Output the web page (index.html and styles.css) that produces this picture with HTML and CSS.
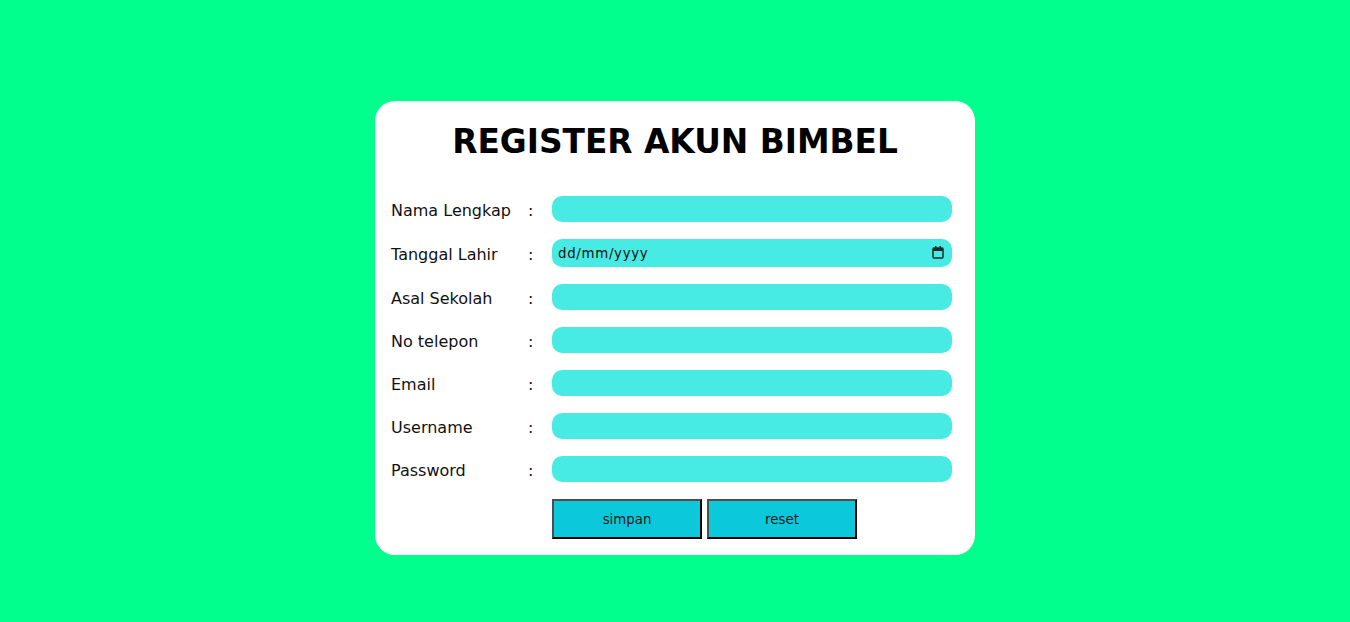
FILE: index.html
```html
<!DOCTYPE html>
<html lang="id">
<head>
<meta charset="utf-8">
<title>Register Akun Bimbel</title>
<link rel="stylesheet" href="styles.css">
</head>
<body>
<div class="card">
  <h1 class="title">REGISTER AKUN BIMBEL</h1>
  <form class="form">
    <label class="label">Nama Lengkap</label><span class="colon">:</span><input class="field" type="text">
    <label class="label">Tanggal Lahir</label><span class="colon">:</span>
    <div class="date-wrap">
      <input class="field date" type="text" placeholder="dd/mm/yyyy">
      <svg class="cal" width="12" height="13" viewBox="0 0 12 13" aria-hidden="true">
        <rect x="1" y="2" width="10" height="10" rx="1" fill="none" stroke="#1e2b2a" stroke-width="1.5"/>
        <rect x="1" y="2" width="10" height="3" fill="#1e2b2a"/>
        <rect x="3" y="0" width="1.5" height="3" fill="#1e2b2a"/>
        <rect x="7.5" y="0" width="1.5" height="3" fill="#1e2b2a"/>
      </svg>
    </div>
    <label class="label">Asal Sekolah</label><span class="colon">:</span><input class="field" type="text">
    <label class="label">No telepon</label><span class="colon">:</span><input class="field" type="text">
    <label class="label">Email</label><span class="colon">:</span><input class="field" type="text">
    <label class="label">Username</label><span class="colon">:</span><input class="field" type="text">
    <label class="label">Password</label><span class="colon">:</span><input class="field" type="password">
    <div class="actions">
      <button type="button" class="btn">simpan</button>
      <button type="reset" class="btn">reset</button>
    </div>
  </form>
</div>
</body>
</html>
```
FILE: styles.css
```css
html, body {
  margin: 0;
  padding: 0;
}
body {
  background: #00ff8c;
  height: 622px;
  font-family: "DejaVu Sans", Verdana, sans-serif;
  color: #111;
  padding-top: 101px;
  box-sizing: border-box;
}
.card {
  width: 600px;
  box-sizing: border-box;
  margin: 0 auto;
  background: #fff;
  border-radius: 20px;
  padding: 23px 0 16px 0;
}
.title {
  margin: 0 0 35px 0;
  text-align: center;
  font-size: 32.8px;
  font-weight: bold;
  color: #000;
  line-height: 37px;
}
.form {
  display: grid;
  grid-template-columns: 137px 24px 400px;
  row-gap: 17px;
  align-items: center;
  margin-left: 16px;
}
.label,
.colon {
  font-size: 16px;
  color: #111;
  padding-top: 2px;
}
.field {
  display: block;
  width: 400px;
  height: 26px;
  box-sizing: border-box;
  border: none;
  border-radius: 10px;
  background: #48ebe3;
  padding: 0 6px;
  font-family: "DejaVu Sans", sans-serif;
  font-size: 13.33px;
  color: #111;
  outline: none;
}
.date-wrap {
  position: relative;
  width: 400px;
}
.date {
  height: 28px;
  padding-top: 1px;
  letter-spacing: 0.7px;
}
.date::placeholder {
  color: #111;
  opacity: 1;
}
.cal {
  position: absolute;
  right: 8px;
  top: 7px;
}
.actions {
  grid-column: 3;
  display: flex;
  gap: 5px;
}
.btn {
  width: 150px;
  height: 40px;
  box-sizing: border-box;
  background: #0bc8da;
  border-style: solid;
  border-width: 2px;
  border-color: #4d4d4d #000 #000 #4d4d4d;
  font-family: "DejaVu Sans", sans-serif;
  font-size: 13.33px;
  color: #1a1a1a;
  padding: 0;
}
```
